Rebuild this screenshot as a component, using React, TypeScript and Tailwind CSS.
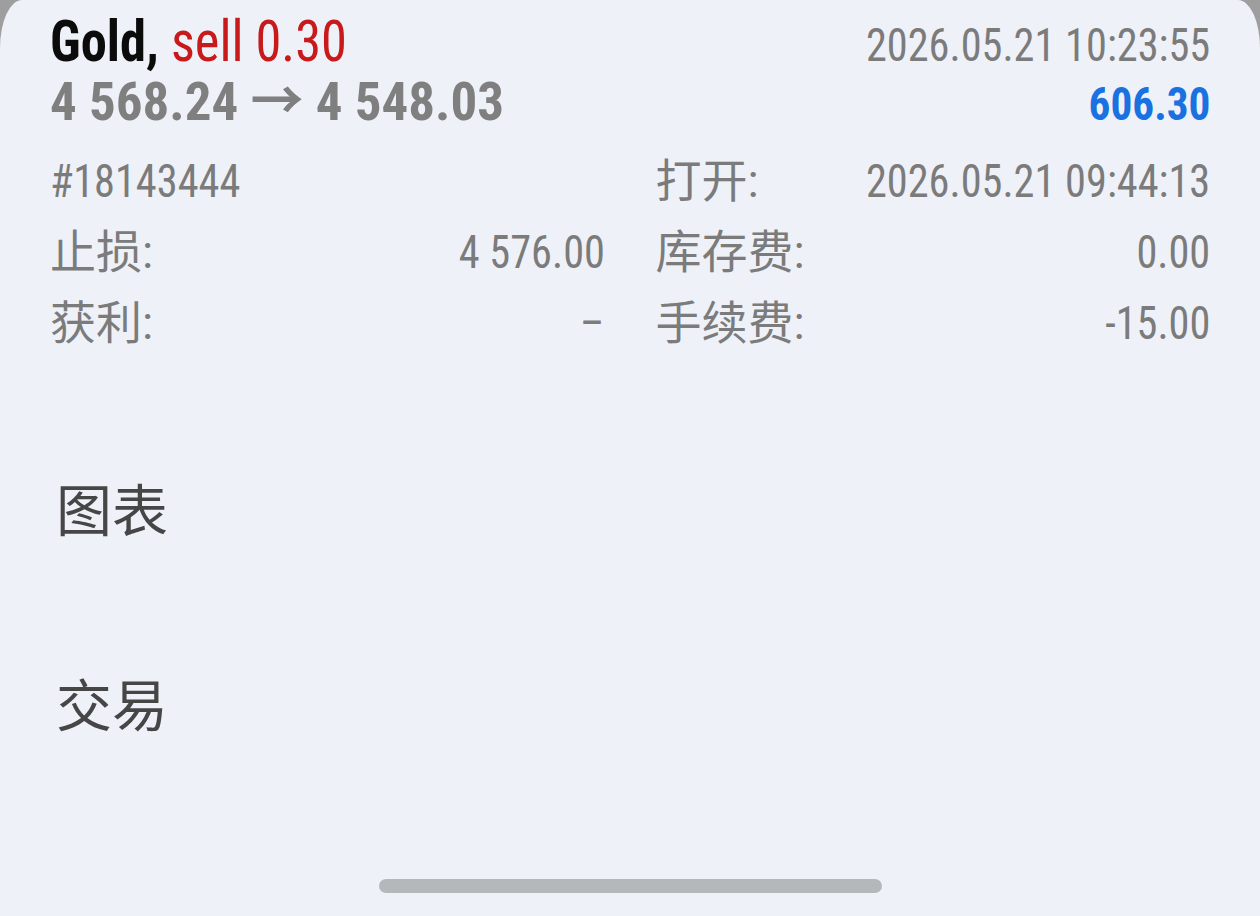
import React from "react";

const FONT = "font-['Roboto_Condensed','Roboto','Noto_Sans_CJK_SC',sans-serif] [font-stretch:condensed]";

// the reference glyphs are a touch narrower than Roboto Condensed
function Narrow({ children, right }: { children: React.ReactNode; right?: boolean }) {
  return (
    <span className={`inline-block scale-x-[0.92] whitespace-pre ${right ? "origin-right" : "origin-left"}`}>
      {children}
    </span>
  );
}

const DETAILS: { label: string; value: string; latin?: boolean }[][] = [
  [
    { label: "#18143444", value: "", latin: true },
    { label: "打开:", value: "2026.05.21 09:44:13" },
  ],
  [
    { label: "止损:", value: "4 576.00" },
    { label: "库存费:", value: "0.00" },
  ],
  [
    { label: "获利:", value: "–" },
    { label: "手续费:", value: "-15.00" },
  ],
];

function DetailCell({ label, value, latin }: { label: string; value: string; latin?: boolean }) {
  return (
    <div className="flex items-baseline justify-between">
      <span>{latin ? <Narrow>{label}</Narrow> : label}</span>
      <span>
        <Narrow right>{value}</Narrow>
      </span>
    </div>
  );
}

export default function App() {
  return (
    <div className={`h-[916px] w-[1260px] overflow-hidden bg-[#9e9e9e] ${FONT}`}>
      <div className="flex h-full flex-col rounded-t-[22px_48px] bg-[#eef1f8]">
        {/* Position header */}
        <div className="px-[50px] pt-[12px]">
          <div className="flex h-[60px] items-baseline justify-between leading-[60px]">
            <div className="text-[57px]">
              <Narrow>
                <span className="font-bold text-[#0b0b0b]">Gold,</span>{" "}
                <span className="text-[#c8191b]">sell 0.30</span>
              </Narrow>
            </div>
            <div className="text-[46px] text-[#7b7b7b]">
              <Narrow right>2026.05.21 10:23:55</Narrow>
            </div>
          </div>
          <div className="flex h-[60px] items-baseline justify-between leading-[60px]">
            <div className="text-[53px] font-bold text-[#7f7f7f]">4 568.24 → 4 548.03</div>
            <div className="text-[47px] font-bold text-[#1a72e0]">
              <Narrow right>606.30</Narrow>
            </div>
          </div>
        </div>

        {/* Details grid */}
        <div className="mt-[14px] grid grid-cols-2 gap-x-[51px] px-[50px] text-[46px] leading-[71px] text-[#7b7b7b]">
          {DETAILS.map((row, i) => (
            <React.Fragment key={i}>
              <DetailCell {...row[0]} />
              <DetailCell {...row[1]} />
            </React.Fragment>
          ))}
        </div>

        {/* Menu */}
        <div className="mt-[50px] font-['Noto_Sans_CJK_SC',sans-serif] text-[56px] text-[#464646]">
          <div className="flex h-[195px] items-center pl-[56px]">图表</div>
          <div className="flex h-[195px] items-center pl-[56px]">交易</div>
        </div>

        <div className="mt-auto flex justify-center pb-[23px]">
          <div className="h-[14px] w-[503px] rounded-full bg-[#b5b8bb]" />
        </div>
      </div>
    </div>
  );
}
